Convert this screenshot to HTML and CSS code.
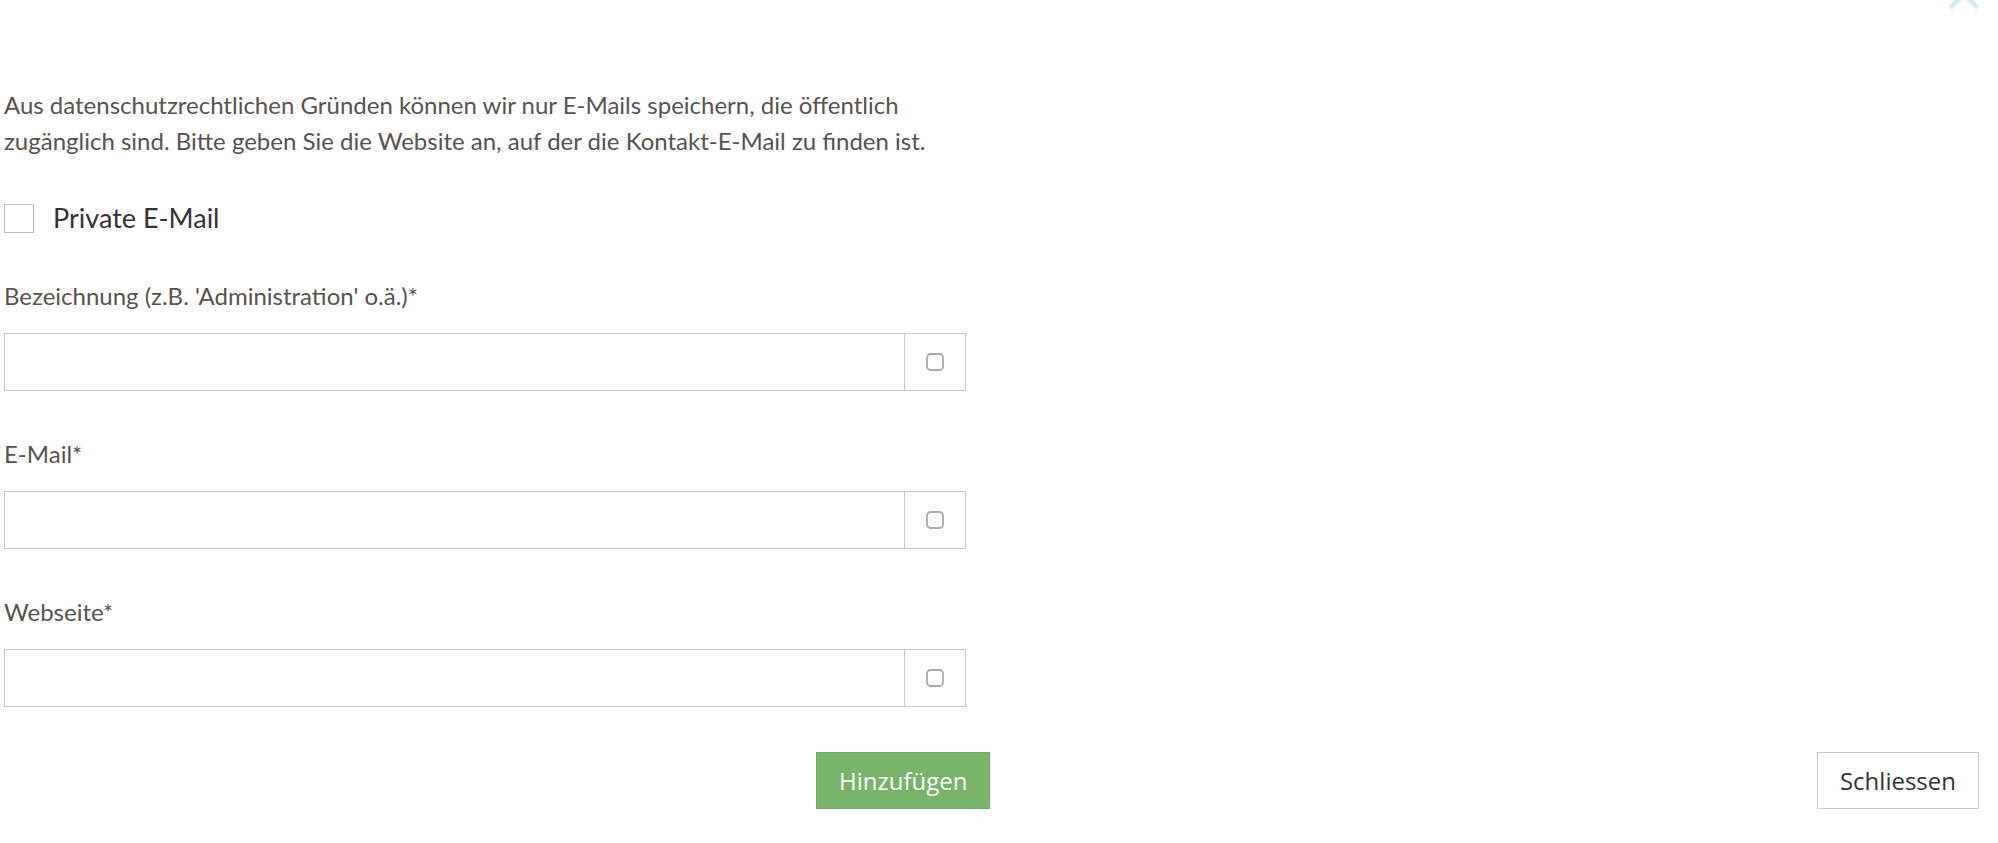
FILE: index.html
```html
<!DOCTYPE html>
<html lang="de">
<head>
    <meta charset="UTF-8">
    <meta name="viewport" content="width=device-width, initial-scale=1.0">
    <title>E-Mail hinzufügen</title>
    <link rel="stylesheet" href="styles.css">
</head>
<body>
    <button class="close" type="button" aria-label="Schliessen">
        <svg width="40" height="40" viewBox="0 0 40 40"><path d="M6 6 L34 34 M34 6 L6 34" stroke="#d4edf3" stroke-width="5" fill="none"/></svg>
    </button>
    <div class="modal-body">
        <p class="intro">Aus datenschutzrechtlichen Gründen können wir nur E-Mails speichern, die öffentlich zugänglich sind. Bitte geben Sie die Website an, auf der die Kontakt-E-Mail zu finden ist.</p>

        <label class="check">
            <input type="checkbox">
            <span class="box"></span>
            <span>Private E-Mail</span>
        </label>

        <div class="field">
            <label for="name">Bezeichnung (z.B. 'Administration' o.ä.)*</label>
            <div class="input-group">
                <input id="name" type="text">
                <span class="addon"><svg width="18" height="18" viewBox="0 0 18 18"><rect x="1" y="1" width="16" height="16" rx="3.5" fill="none" stroke="#aaa" stroke-width="1.8"/></svg></span>
            </div>
        </div>

        <div class="field">
            <label for="mail">E-Mail*</label>
            <div class="input-group">
                <input id="mail" type="text">
                <span class="addon"><svg width="18" height="18" viewBox="0 0 18 18"><rect x="1" y="1" width="16" height="16" rx="3.5" fill="none" stroke="#aaa" stroke-width="1.8"/></svg></span>
            </div>
        </div>

        <div class="field">
            <label for="web">Webseite*</label>
            <div class="input-group">
                <input id="web" type="text">
                <span class="addon"><svg width="18" height="18" viewBox="0 0 18 18"><rect x="1" y="1" width="16" height="16" rx="3.5" fill="none" stroke="#aaa" stroke-width="1.8"/></svg></span>
            </div>
        </div>
    </div>
    <div class="modal-footer">
        <button class="btn btn-add" type="button">Hinzufügen</button>
        <button class="btn btn-close" type="button">Schliessen</button>
    </div>
</body>
</html>
```

FILE: styles.css
```css
body {
    font-family: Lato, "Open Sans", sans-serif;
    margin: 0;
    padding: 0;
    background: #fff;
    color: #57534f;
}
.close {
    position: absolute;
    top: -26px;
    right: 14px;
    padding: 0;
    border: none;
    background: none;
    cursor: pointer;
}
.close svg {
    display: block;
}
.modal-body {
    padding: 87px 0 0 4px;
    width: 962px;
}
.intro {
    margin: 0;
    font-size: 24px;
    line-height: 36px;
}
.check {
    display: flex;
    align-items: center;
    height: 28px;
    margin-top: 45px;
    font-size: 27px;
    line-height: 28px;
    color: #333;
    cursor: pointer;
}
.check input {
    display: none;
}
.check .box {
    width: 28px;
    height: 27px;
    border: 1px solid #bbb;
    margin-right: 19px;
}
.field {
    margin-top: 47px;
}
.field:first-of-type {
    margin-top: 48px;
}
.field label {
    display: block;
    font-size: 24px;
    line-height: 32px;
    margin-bottom: 21px;
}
.input-group {
    display: flex;
    height: 58px;
    box-sizing: border-box;
    border: 1px solid #c8c8c8;
}
.input-group input {
    flex: 1;
    border: none;
    outline: none;
    padding: 0 14px;
    font: inherit;
    font-size: 22px;
}
.addon {
    width: 60px;
    border-left: 1px solid #c8c8c8;
    display: flex;
    align-items: center;
    justify-content: center;
}
.addon svg {
    display: block;
}
.modal-footer {
    display: flex;
    align-items: center;
    margin-top: 45px;
    padding: 0 19px 0 816px;
}
.btn {
    height: 57px;
    padding: 0 22px;
    font-family: "Open Sans", sans-serif;
    font-size: 24px;
    cursor: pointer;
}
.btn-add {
    background: #78b36a;
    color: #fff;
    border: 1px solid #6fab61;
}
.btn-close {
    margin-left: auto;
    background: #fff;
    color: #333;
    border: 1px solid #ccc;
}
```
